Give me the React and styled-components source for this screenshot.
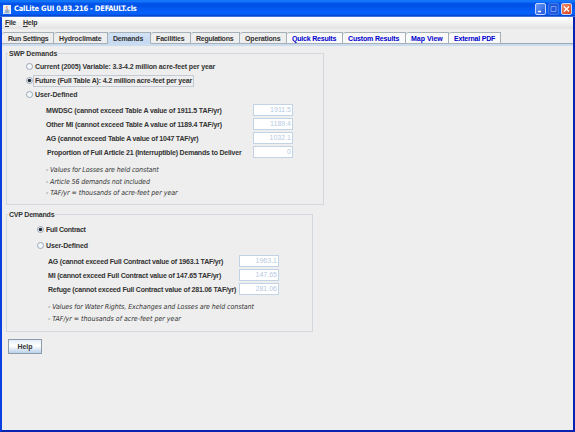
import React from "react";
import styled, { createGlobalStyle, css } from "styled-components";

const GlobalStyle = createGlobalStyle`
  html, body { margin: 0; padding: 0; }
  * { box-sizing: border-box; }
  body { overflow: hidden; font: bold 7px "Liberation Sans", Arial, sans-serif; color: #333; }
`;

const Window = styled.div`
  width: 575px;
  height: 432px;
  display: flex;
  flex-direction: column;
  background: #eee;
  border: solid #0a3fe0;
  border-width: 0 2px 2px;
  border-right-color: #0522b0;
  border-bottom-color: #0522b0;
`;

const TitleBar = styled.header`
  height: 17px;
  flex: none;
  margin: 0 -2px;
  padding: 1px 3px 0 3px;
  display: flex;
  align-items: center;
  gap: 3px;
  background: linear-gradient(#0b6cf5 0, #1a80ff 1px, #0358ee 3px, #0050e4 5px, #0561fb 12px, #0560fa 14px, #0340c8 16px, #7ba4ee 17px);
`;

const Title = styled.h1`
  flex: 1;
  margin: 0;
  color: #fff;
  font: bold 7.5px/14px "DejaVu Sans Condensed", "DejaVu Sans", sans-serif;
  white-space: pre;
  letter-spacing: ${(p) => p.$ls}px;
`;

const Controls = styled.div`
  display: flex;
  gap: 2px;
`;

const ControlButton = styled.span`
  width: 11px;
  height: 12px;
  display: block;
  border: 1px solid ${(p) => (p.$dim ? "#3e78e8" : "#c6d7fb")};
  border-radius: 2px;
  background: ${(p) => (p.$close ? "linear-gradient(135deg,#f0906c,#d8431c)" : p.$dim ? "#2058dc" : "linear-gradient(135deg,#6d9bf6,#2158dc)")};
  svg { display: block; }
`;

const MenuBar = styled.nav`
  height: 12px;
  flex: none;
  display: flex;
  gap: 7px;
  padding: 0 3px;
  line-height: 11px;
  background: linear-gradient(#fff, #f4f4f4 5px, #e2e2e2);
`;

const Text = styled.span`
  white-space: pre;
  letter-spacing: ${(p) => p.$ls || 0}px;
`;

const Mnemonic = styled.u`
  text-underline-offset: 1px;
  text-decoration-thickness: 1px;
`;

const TabStrip = styled.div`
  height: 17px;
  flex: none;
  display: flex;
  align-items: flex-end;
  border-bottom: 2px solid #cbdcee;
  box-shadow: inset 0 -1px #99aab9;
`;

const Tab = styled.div`
  width: ${(p) => p.$w}px;
  height: 12px;
  padding-left: 5px;
  line-height: 12px;
  border: 1px solid #a5b0b8;
  border-left-width: 0;
  border-top-left-radius: 3px;
  background: ${(p) => (p.$active ? "linear-gradient(#d3e3f5,#c4d8f0)" : p.$link ? "#fafafa" : "#eee")};
  color: ${(p) => (p.$link ? "#0000cd" : "#333")};
  ${(p) => p.$active && css`border-bottom-color: #c8ddf2;`}
  ${(p) => p.$first && css`padding-left: 6px;`}
`;

const Page = styled.main`
  flex: 1;
  padding: 7px 0 0 4px;
  display: flex;
  flex-direction: column;
  align-items: flex-start;
`;

const Group = styled.section`
  width: ${(p) => p.$w}px;
  height: ${(p) => p.$h}px;
  margin-bottom: 9px;
  border: 1px solid #d2d8dd;
  display: flex;
  flex-direction: column;
`;

const GroupTitle = styled.h2`
  align-self: flex-start;
  margin: -5px 0 0 1px;
  padding: 0 1px;
  height: 9px;
  font: inherit;
  line-height: 9px;
  white-space: pre;
  background: #eee;
  letter-spacing: ${(p) => p.$ls}px;
`;

const Option = styled.label`
  height: ${(p) => p.$h}px;
  margin-left: ${(p) => p.$x}px;
  display: flex;
  align-items: center;
  gap: 1px;
  svg { margin-bottom: 1px; }
`;

const OptionText = styled(Text)`
  height: 10px;
  line-height: 10px;
  padding: 0 1px;
  ${(p) => p.$focus && css`
    box-shadow: 0 0 0 1px #c2cbd5;
  `}
`;

const Fields = styled.div`
  display: grid;
  grid-template-columns: ${(p) => p.$col}px 40px;
  grid-auto-rows: 14px;
  align-items: center;
  margin: ${(p) => p.$top}px 0 0 ${(p) => p.$x}px;
`;

const FieldText = styled(Text)`
  padding-left: ${(p) => p.$indent || 0}px;
`;

const Value = styled.output`
  height: 12px;
  padding-right: 1px;
  border: 1px solid #c3d3e6;
  background: #fff;
  color: #b6c9df;
  font: 7px/10px "Liberation Sans", Arial, sans-serif;
  text-align: right;
`;

const Notes = styled.div`
  display: flex;
  flex-direction: column;
  margin: ${(p) => p.$top}px 0 0 ${(p) => p.$x}px;
  font: italic 7px/11.5px "DejaVu Sans Condensed", "DejaVu Sans", sans-serif;
`;

const HelpButton = styled.button`
  width: 34px;
  height: 15px;
  margin: -2px 0 0 2px;
  padding: 0;
  border: 1px solid #8d9cab;
  background: linear-gradient(#e4edf7, #fff 45%, #b9d0e9);
  font: inherit;
  color: #333;
`;

const Radio = ({ on }) => (
  <svg width="7" height="7" viewBox="0 0 7 7">
    <circle cx="3.5" cy="3.5" r="3" fill="#f4f8fc" stroke="#8495a6" strokeWidth=".8" />
    {on && <circle cx="3.5" cy="3.5" r="1.8" fill="#222a33" />}
  </svg>
);

const JavaIcon = () => (
  <svg width="8" height="9" viewBox="0 0 8 9">
    <rect width="8" height="9" fill="#e9eef5" />
    <path d="M4.4 1Q2.8 2.2 4 3.2Q4.7 4 3.8 4.8" fill="none" stroke="#df6a4c" strokeWidth=".9" />
    <path d="M2 5.2h3.6M2.3 6.4h3M1.4 7.8h5M5.8 5.2q1.4.4-.3 1.4" fill="none" stroke="#5278a6" strokeWidth=".7" />
  </svg>
);

const tabs = [
  ["Run Settings", 52, -0.22],
  ["Hydroclimate", 54, -0.15],
  ["Demands", 43, -0.2],
  ["Facilities", 40, -0.15],
  ["Regulations", 49, -0.25],
  ["Operations", 47, -0.15],
  ["Quick Results", 56, -0.2, true],
  ["Custom Results", 63, -0.15, true],
  ["Map View", 43, 0, true],
  ["External PDF", 52, -0.2, true],
];

const swpFields = [
  ["MWDSC (cannot exceed Table A value of 1911.5 TAF/yr)", "1911.5", -0.15],
  ["Other MI (cannot exceed Table A value of 1189.4 TAF/yr)", "1189.4", -0.16],
  ["AG (cannot exceed Table A value of 1047 TAF/yr)", "1032.1", -0.19],
  ["Proportion of Full Article 21 (Interruptible) Demands to Deliver", "0", -0.19, 1],
];

const cvpFields = [
  ["AG (cannot exceed Full Contract value of 1963.1 TAF/yr)", "1963.1", -0.2],
  ["MI (cannot exceed Full Contract value of 147.65 TAF/yr)", "147.65", -0.19],
  ["Refuge (cannot exceed Full Contract value of 281.06 TAF/yr)", "281.06", -0.19],
];

const FieldRows = ({ rows }) =>
  rows.map(([label, value, ls, indent]) => (
    <React.Fragment key={label}>
      <FieldText $ls={ls} $indent={indent}>{label}</FieldText>
      <Value>{value}</Value>
    </React.Fragment>
  ));

export default function App() {
  return (
    <>
      <GlobalStyle />
      <Window>
        <TitleBar>
          <JavaIcon />
          <Title $ls={-0.19}>CalLite GUI 0.83.216 - DEFAULT.cls</Title>
          <Controls>
            <ControlButton><svg width="9" height="10"><path d="M2 7.5h3" stroke="#fff" strokeWidth="1.5" /></svg></ControlButton>
            <ControlButton $dim><svg width="9" height="10"><path d="M2 2.5h5v5H2z" fill="none" stroke="#7099ef" /></svg></ControlButton>
            <ControlButton $close><svg width="9" height="10"><path d="M2 2.5l5 5m0-5l-5 5" stroke="#fff" strokeWidth="1.3" /></svg></ControlButton>
          </Controls>
        </TitleBar>
        <MenuBar>
          <Text $ls={-0.3}><Mnemonic>F</Mnemonic>ile</Text>
          <Text $ls={-0.2}><Mnemonic>H</Mnemonic>elp</Text>
        </MenuBar>
        <TabStrip>
          {tabs.map(([name, w, ls, link], i) => (
            <Tab key={name} $w={w} $link={link} $first={i === 0} $active={name === "Demands"}>
              <Text $ls={ls}>{name}</Text>
            </Tab>
          ))}
        </TabStrip>
        <Page>
          <Group $w={318} $h={152}>
            <GroupTitle $ls={-0.1}>SWP Demands</GroupTitle>
            <Option $x={19} $h={18}><Radio /><OptionText $ls={-0.12}>Current (2005) Variable: 3.3-4.2 million acre-feet per year</OptionText></Option>
            <Option $x={19} $h={10}><Radio on /><OptionText $ls={-0.17} $focus>Future (Full Table A): 4.2 million acre-feet per year</OptionText></Option>
            <Option $x={19} $h={18}><Radio /><OptionText $ls={-0.1}>User-Defined</OptionText></Option>
            <Fields $col={207} $x={39} $top={-1}><FieldRows rows={swpFields} /></Fields>
            <Notes $x={39} $top={6}>
              <Text $ls={-0.09}>- Values for Losses are held constant</Text>
              <Text $ls={-0.09}>- Article 56 demands not included</Text>
              <Text $ls={-0.03}>- TAF/yr = thousands of acre-feet per year</Text>
            </Notes>
          </Group>
          <Group $w={307} $h={118}>
            <GroupTitle $ls={-0.22}>CVP Demands</GroupTitle>
            <Option $x={30} $h={22}><Radio on /><OptionText $ls={-0.27}>Full Contract</OptionText></Option>
            <Option $x={30} $h={10}><Radio /><OptionText $ls={-0.15}>User-Defined</OptionText></Option>
            <Fields $col={191} $x={41} $top={3}><FieldRows rows={cvpFields} /></Fields>
            <Notes $x={41} $top={6}>
              <Text $ls={-0.07}>- Values for Water Rights, Exchanges and Losses are held constant</Text>
              <Text>- TAF/yr = thousands of acre-feet per year</Text>
            </Notes>
          </Group>
          <HelpButton>Help</HelpButton>
        </Page>
      </Window>
    </>
  );
}
